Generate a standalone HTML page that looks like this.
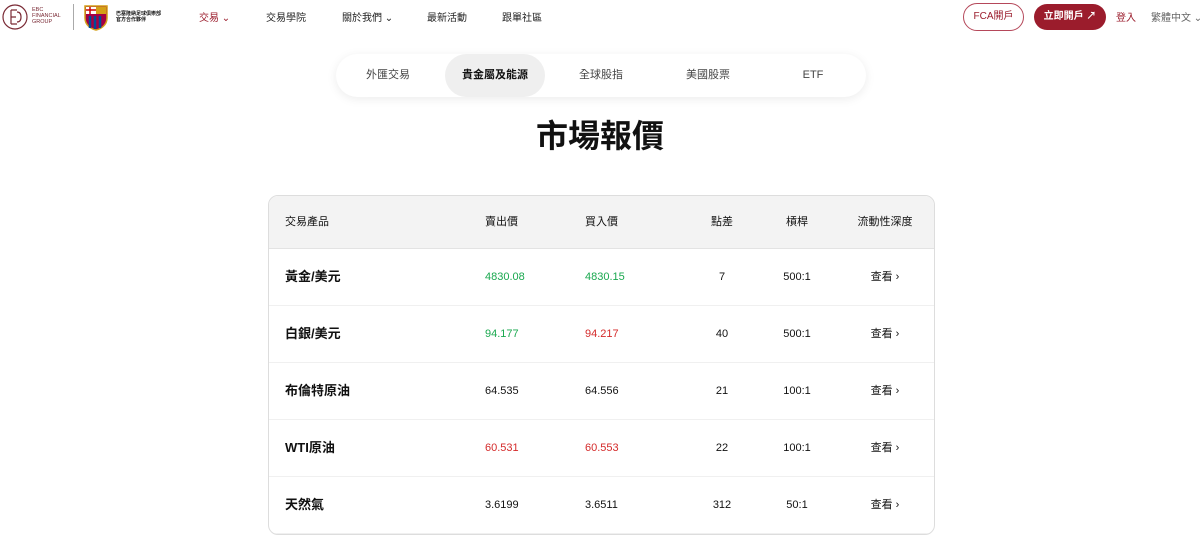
<!DOCTYPE html>
<html><head><meta charset="utf-8"><style>
*{margin:0;padding:0;box-sizing:border-box}
body{width:1200px;height:540px;overflow:hidden;background:#fff;font-family:"Liberation Sans","Noto Sans CJK TC",sans-serif;color:#111;position:relative}
.a{position:absolute;white-space:nowrap}
.nav{font-size:10px;color:#222;top:9px;height:20px;line-height:20px}
.tabs{left:336px;top:54px;width:530px;height:43px;border-radius:22px;background:#fff;box-shadow:0 2px 10px rgba(0,0,0,.08)}
.tab{position:absolute;top:0;height:43px;line-height:43px;font-size:11px;color:#444;text-align:center}
.tbl{left:268px;top:195px;width:667px;height:340px;border:1px solid #ddd;border-radius:10px;overflow:hidden}
.hd{position:absolute;left:0;top:0;width:100%;height:53px;background:#f3f3f3;border-bottom:1px solid #e3e3e3}
.hd .c{top:0;line-height:52px;height:52px}
.c{position:absolute;font-size:11px;top:0;height:56px;line-height:56px}
.row{position:absolute;left:0;width:100%;height:57px;border-bottom:1px solid #f0f0f0}
.n{font-size:13px;font-weight:bold}
.g{color:#1aa84f}.r{color:#d42a2a}
.btn{display:flex;align-items:center;justify-content:center;font-size:10px;line-height:1}
</style></head><body>
<svg class="a" style="left:2px;top:4px" width="26" height="26" viewBox="0 0 26 26"><circle cx="13" cy="13" r="12" fill="none" stroke="#7a2a35" stroke-width="1.2"/><path d="M9 6v14M9 6h6M9 13h5M9 20h6M15 8c3 0 4 2 4 5s-1 5-4 5" fill="none" stroke="#7a2a35" stroke-width="1.2"/></svg>
<div class="a" style="left:32px;top:7px;font-size:5.5px;line-height:6px;color:#7a2a35">EBC<br>FINANCIAL<br>GROUP</div>
<div class="a" style="left:73px;top:4px;width:1px;height:26px;background:#aaa"></div>
<svg class="a" style="left:83px;top:3px" width="26" height="28" viewBox="0 0 26 28"><path d="M2 3h22v12c0 7-6 11-11 12C8 26 2 22 2 15z" fill="#a50044" stroke="#d4a017" stroke-width="1.5"/><rect x="3" y="4" width="10" height="7" fill="#fff"/><path d="M7 4v7M3 7h10" stroke="#c00" stroke-width="1.5"/><rect x="13" y="4" width="10" height="7" fill="#d4a017"/><path d="M7 13v12M12 13v13M17 13v12" stroke="#004d98" stroke-width="2.5"/></svg>
<div class="a" style="left:116px;top:11px;font-size:5px;line-height:6px;font-weight:bold">巴塞隆納足球俱樂部<br>官方合作夥伴</div>
<div class="a nav" style="left:199px;color:#9b1c2c">交易 ⌄</div>
<div class="a nav" style="left:266px">交易學院</div>
<div class="a nav" style="left:342px">關於我們 ⌄</div>
<div class="a nav" style="left:427px">最新活動</div>
<div class="a nav" style="left:502px">跟單社區</div>
<div class="a btn" style="left:963px;top:3px;width:61px;height:28px;border:1px solid #b5485a;border-radius:14px;color:#9b1c2c">FCA開戶</div>
<div class="a btn" style="left:1034px;top:4px;width:72px;height:26px;background:#9b1c2c;border-radius:13px;color:#fff;font-weight:bold">立即開戶 ↗</div>
<div class="a nav" style="left:1116px;color:#9b1c2c">登入</div>
<div class="a nav" style="left:1151px;color:#666">繁體中文 ⌄</div>
<div class="a tabs">
<div class="tab" style="left:14px;width:76px">外匯交易</div>
<div class="tab" style="left:109px;width:100px;background:#efefef;border-radius:22px;color:#111;font-weight:bold">貴金屬及能源</div>
<div class="tab" style="left:226px;width:78px">全球股指</div>
<div class="tab" style="left:333px;width:78px">美國股票</div>
<div class="tab" style="left:448px;width:58px">ETF</div>
</div>
<div class="a" style="left:0;width:1200px;top:113px;height:46px;line-height:46px;text-align:center;font-size:32px;font-weight:bold">市場報價</div>
<div class="a tbl">
<div class="hd">
<div class="c" style="left:16px">交易產品</div>
<div class="c" style="left:216px">賣出價</div>
<div class="c" style="left:316px">買入價</div>
<div class="c" style="left:424px;width:58px;text-align:center">點差</div>
<div class="c" style="left:498px;width:60px;text-align:center">槓桿</div>
<div class="c" style="left:576px;width:80px;text-align:center">流動性深度</div>
</div>
<div class="row" style="top:53px"><div class="c n" style="left:16px">黃金/美元</div><div class="c g" style="left:216px">4830.08</div><div class="c g" style="left:316px">4830.15</div><div class="c" style="left:424px;width:58px;text-align:center">7</div><div class="c" style="left:498px;width:60px;text-align:center">500:1</div><div class="c" style="left:576px;width:80px;text-align:center">查看 ›</div></div>
<div class="row" style="top:110px"><div class="c n" style="left:16px">白銀/美元</div><div class="c g" style="left:216px">94.177</div><div class="c r" style="left:316px">94.217</div><div class="c" style="left:424px;width:58px;text-align:center">40</div><div class="c" style="left:498px;width:60px;text-align:center">500:1</div><div class="c" style="left:576px;width:80px;text-align:center">查看 ›</div></div>
<div class="row" style="top:167px"><div class="c n" style="left:16px">布倫特原油</div><div class="c" style="left:216px">64.535</div><div class="c" style="left:316px">64.556</div><div class="c" style="left:424px;width:58px;text-align:center">21</div><div class="c" style="left:498px;width:60px;text-align:center">100:1</div><div class="c" style="left:576px;width:80px;text-align:center">查看 ›</div></div>
<div class="row" style="top:224px"><div class="c n" style="left:16px">WTI原油</div><div class="c r" style="left:216px">60.531</div><div class="c r" style="left:316px">60.553</div><div class="c" style="left:424px;width:58px;text-align:center">22</div><div class="c" style="left:498px;width:60px;text-align:center">100:1</div><div class="c" style="left:576px;width:80px;text-align:center">查看 ›</div></div>
<div class="row" style="top:281px"><div class="c n" style="left:16px">天然氣</div><div class="c" style="left:216px">3.6199</div><div class="c" style="left:316px">3.6511</div><div class="c" style="left:424px;width:58px;text-align:center">312</div><div class="c" style="left:498px;width:60px;text-align:center">50:1</div><div class="c" style="left:576px;width:80px;text-align:center">查看 ›</div></div>
</div>
</body></html>
